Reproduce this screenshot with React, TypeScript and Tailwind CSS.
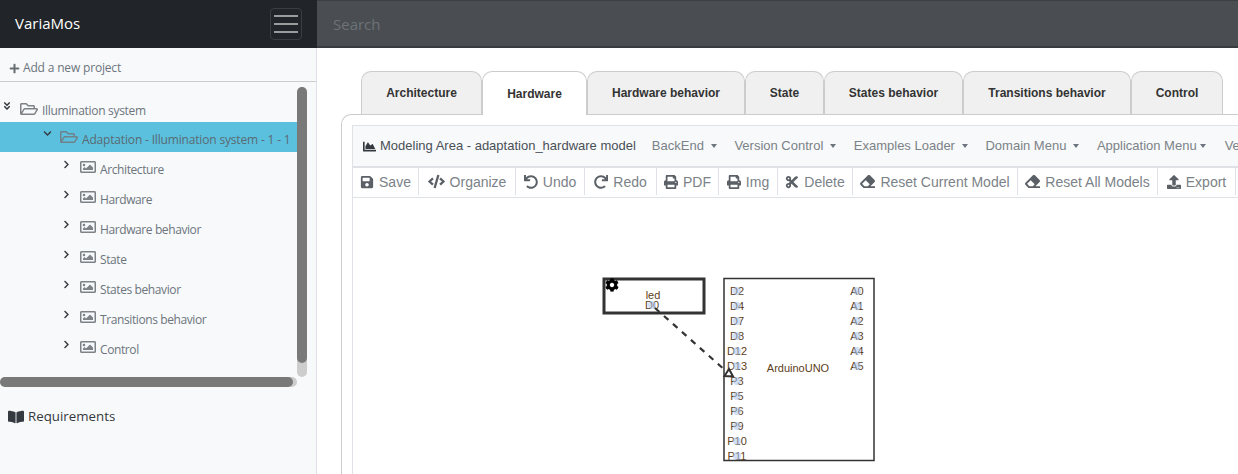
import {
  FaAngleDoubleDown,
  FaBookOpen,
  FaChartArea,
  FaChevronDown,
  FaChevronRight,
  FaCode,
  FaCog,
  FaCut,
  FaEraser,
  FaPlus,
  FaPrint,
  FaRedo,
  FaRegFolderOpen,
  FaRegImage,
  FaSave,
  FaUndo,
  FaUpload,
} from "react-icons/fa";

const models = ["Architecture", "Hardware", "Hardware behavior", "State", "States behavior", "Transitions behavior", "Control"];

const tabs = [
  { label: "Architecture", width: "w-[121px]" },
  { label: "Hardware", width: "w-[105px]" },
  { label: "Hardware behavior", width: "w-[158px]" },
  { label: "State", width: "w-[79px]" },
  { label: "States behavior", width: "w-[139px]" },
  { label: "Transitions behavior", width: "w-[168px]" },
  { label: "Control", width: "w-[92px]" },
];

const menus = ["BackEnd", "Version Control", "Examples Loader", "Domain Menu", "Application Menu"];

const tools = [
  { label: "Save", icon: FaSave, size: 14, width: "w-[66px]" },
  { label: "Organize", icon: FaCode, size: 17, width: "w-[97px]" },
  { label: "Undo", icon: FaUndo, size: 14, width: "w-[69px]" },
  { label: "Redo", icon: FaRedo, size: 14, width: "w-[72px]" },
  { label: "PDF", icon: FaPrint, size: 14, width: "w-[62px]" },
  { label: "Img", icon: FaPrint, size: 14, width: "w-[59px]" },
  { label: "Delete", icon: FaCut, size: 14, width: "w-[75px]" },
  { label: "Reset Current Model", icon: FaEraser, size: 15, width: "w-[165px]" },
  { label: "Reset All Models", icon: FaEraser, size: 15, width: "w-[140px]" },
  { label: "Export", icon: FaUpload, size: 14, width: "w-[78px]" },
];

const leftPins = ["D2", "D4", "D7", "D8", "D12", "D13", "P3", "P5", "P6", "P9", "P10", "P11"];
const rightPins = ["A0", "A1", "A2", "A3", "A4", "A5"];

const Pin = ({ label, x, y }: { label: string; x: number; y: number }) => (
  <g>
    <text x={x} y={y + 4} textAnchor="middle" fontSize={11} fill="#5e4020">
      {label}
    </text>
    <circle cx={x} cy={y} r={4} fill="#a9c4ec" fillOpacity={0.55} />
  </g>
);

const Diagram = () => (
  <svg viewBox="353 198 885 276" className="h-[276px] w-[885px]" fontFamily="'Liberation Sans', sans-serif">
    {/* led node */}
    <rect x={604} y={279} width={100} height={34} fill="#fff" stroke="#333" strokeWidth={3} />
    <FaCog x={605} y={278} size={14} color="#000" />
    <text x={653} y={299} textAnchor="middle" fontSize={11} fill="#5e4020">
      led
    </text>
    <Pin label="D0" x={652} y={305} />

    {/* arduino node */}
    <rect x={724} y={278.5} width={150} height={182} fill="#fff" stroke="#333" strokeWidth={1.5} />
    {leftPins.map((pin, i) => (
      <Pin key={pin} label={pin} x={737} y={291 + i * 15} />
    ))}
    {rightPins.map((pin, i) => (
      <Pin key={pin} label={pin} x={857} y={291 + i * 15} />
    ))}
    <text x={798} y={372} textAnchor="middle" fontSize={11} fill="#5e4020">
      ArduinoUNO
    </text>

    {/* connection */}
    <path d="M655 308 L726 371" fill="none" stroke="#333" strokeWidth={2.2} strokeDasharray="6 6" />
    <path d="M729 369 L724.5 376 L733 376.5 Z" fill="none" stroke="#333" strokeWidth={2} />
  </svg>
);

export default function App() {
  return (
    <div className="flex h-[474px] w-[1238px] flex-col overflow-hidden bg-white font-['Liberation_Sans',sans-serif]">
      <header className="flex h-12 shrink-0">
        <div className="flex w-[317px] items-center justify-between bg-[#212529] pl-[15px] pr-[15px]">
          <span className="-mt-[2px] font-['Open_Sans',sans-serif] text-[15px] text-white">VariaMos</span>
          <button className="flex h-8 w-8 flex-col justify-between rounded border border-[#3a3e43] px-[3px] py-[6px]">
            <span className="h-[2px] w-full bg-[#9a9b9d]" />
            <span className="h-[2px] w-full bg-[#9a9b9d]" />
            <span className="h-[2px] w-full bg-[#9a9b9d]" />
          </button>
        </div>
        <div className="flex flex-1 items-center border-b-2 border-t border-b-[#393c3f] border-t-[#3c4043] bg-[#4a4e52] pl-4">
          <span className="mt-[2px] font-['Open_Sans',sans-serif] text-[15px] text-[#6c7278]">Search</span>
        </div>
      </header>

      <div className="flex min-h-0 flex-1">
        <aside className="relative w-[317px] shrink-0 border-r border-[#dee2e6] bg-[#f8f9fa] font-['Open_Sans',sans-serif]">
          <div className="flex h-[34px] items-center gap-[3px] border-b border-[#ccc] pl-[9px] pt-[7px] text-xs tracking-[-0.17px] text-[#6c757d]">
            <FaPlus size={11} className="shrink-0 text-[#6a6f74]" />
            <span>Add a new project</span>
          </div>

          <ul className="pt-[13px] text-xs text-[#6c757d]">
            <li className="flex h-[27px] items-center">
              <FaAngleDoubleDown size={10} className="ml-[2px] -mt-[5px] shrink-0 text-[#343a40]" />
              <FaRegFolderOpen size={18} className="ml-[8px] shrink-0 text-[#7d8287]" />
              <span className="ml-[4px] mt-[4px] tracking-[-0.3px]">Illumination system</span>
            </li>
            <li className="flex h-[30px] w-[297px] items-center bg-[#5bc0de]">
              <FaChevronDown size={9} className="ml-[43px] -mt-[7px] shrink-0 text-[#343a40]" />
              <FaRegFolderOpen size={18} className="ml-[8px] shrink-0 text-[#6f8189]" />
              <span className="ml-[4px] mt-[6px] whitespace-nowrap tracking-[-0.17px] text-[#5a6a72]">Adaptation - Illumination system - 1 - 1</span>
            </li>
            {models.map((model) => (
              <li key={model} className="flex h-[30px] items-center">
                <FaChevronRight size={9} className="ml-[62px] -mt-[6px] shrink-0 text-[#343a40]" />
                <FaRegImage size={16} className="ml-[9px] shrink-0 text-[#7d8287]" />
                <span className="ml-[4px] mt-[6px] tracking-[-0.4px]">{model}</span>
              </li>
            ))}
          </ul>

          {/* custom scrollbars */}
          <div className="absolute left-[297px] top-[39px] h-[290px] w-[10px] rounded-full bg-[#cdcdcd]" />
          <div className="absolute left-[297px] top-[39px] h-[276px] w-[10px] rounded-full bg-[#797979]" />
          <div className="absolute left-0 top-[329px] h-[10px] w-[297px] rounded-full bg-[#cdcdcd]" />
          <div className="absolute left-0 top-[329px] h-[10px] w-[293px] rounded-full bg-[#797979]" />

          <div className="absolute left-[8px] top-[359px] flex items-center gap-[4px] text-[13.3px] font-medium text-[#343a40]">
            <FaBookOpen size={16} className="shrink-0" />
            <span>Requirements</span>
          </div>
        </aside>

        <main className="flex min-w-0 flex-1 flex-col pl-6 pt-[23px]">
          <nav className="ml-[20px] flex h-[43px] shrink-0">
            {tabs.map((tab) => (
              <div
                key={tab.label}
                className={
                  tab.label === "Hardware"
                    ? `${tab.width} relative z-10 -mb-px flex h-[44px] shrink-0 items-center justify-center rounded-t-[10px] border border-b-0 border-[#ccc] bg-white text-xs font-bold text-[#333]`
                    : `${tab.width} flex shrink-0 items-center justify-center rounded-t-[10px] border border-b-0 border-[#ccc] bg-[#f0f0f0] text-xs font-bold text-[#333]`
                }
              >
                {tab.label}
              </div>
            ))}
          </nav>

          <section className="min-h-0 flex-1 rounded-tl-[10px] border-l border-t border-[#ccc] pl-[10px] pt-[10px]">
            <div className="h-full overflow-hidden border-l border-t border-[#dee2e6]">
              <div className="flex h-[42px] items-center overflow-hidden whitespace-nowrap border-b-2 border-[#dee2e6] bg-[#f8f9fa] pl-[10px] text-[13px] text-[#7b8288]">
                <FaChartArea size={13} className="mr-[4px] shrink-0 text-[#343a40]" />
                <span className="mr-[16px] shrink-0 text-[#495057]">Modeling Area - adaptation_hardware model</span>
                {menus.map((menu) => (
                  <span key={menu} className={menu === "Application Menu" ? "mr-[19px] flex shrink-0 items-center" : "mr-[17.5px] flex shrink-0 items-center"}>
                    {menu}
                    <span
                      className={
                        menu === "Application Menu"
                          ? "ml-[3px] border-x-[3.5px] border-t-[4px] border-x-transparent border-t-[#6c757d]"
                          : "ml-[7px] border-x-[3.5px] border-t-[4px] border-x-transparent border-t-[#6c757d]"
                      }
                    />
                  </span>
                ))}
                <span className="shrink-0">Versions</span>
              </div>
              <div className="flex h-[30px] border-b border-[#dee2e6] bg-white pb-[2px] text-sm text-[#7b8288]">
                {tools.map((tool) => (
                  <div key={tool.label} className={`${tool.width} flex shrink-0 items-center justify-center gap-[5px] whitespace-nowrap border-r border-[#dee2e6]`}>
                    <tool.icon size={tool.size} className="shrink-0 text-[#5a6066]" />
                    <span>{tool.label}</span>
                  </div>
                ))}
              </div>
              <Diagram />
            </div>
          </section>
        </main>
      </div>
    </div>
  );
}
